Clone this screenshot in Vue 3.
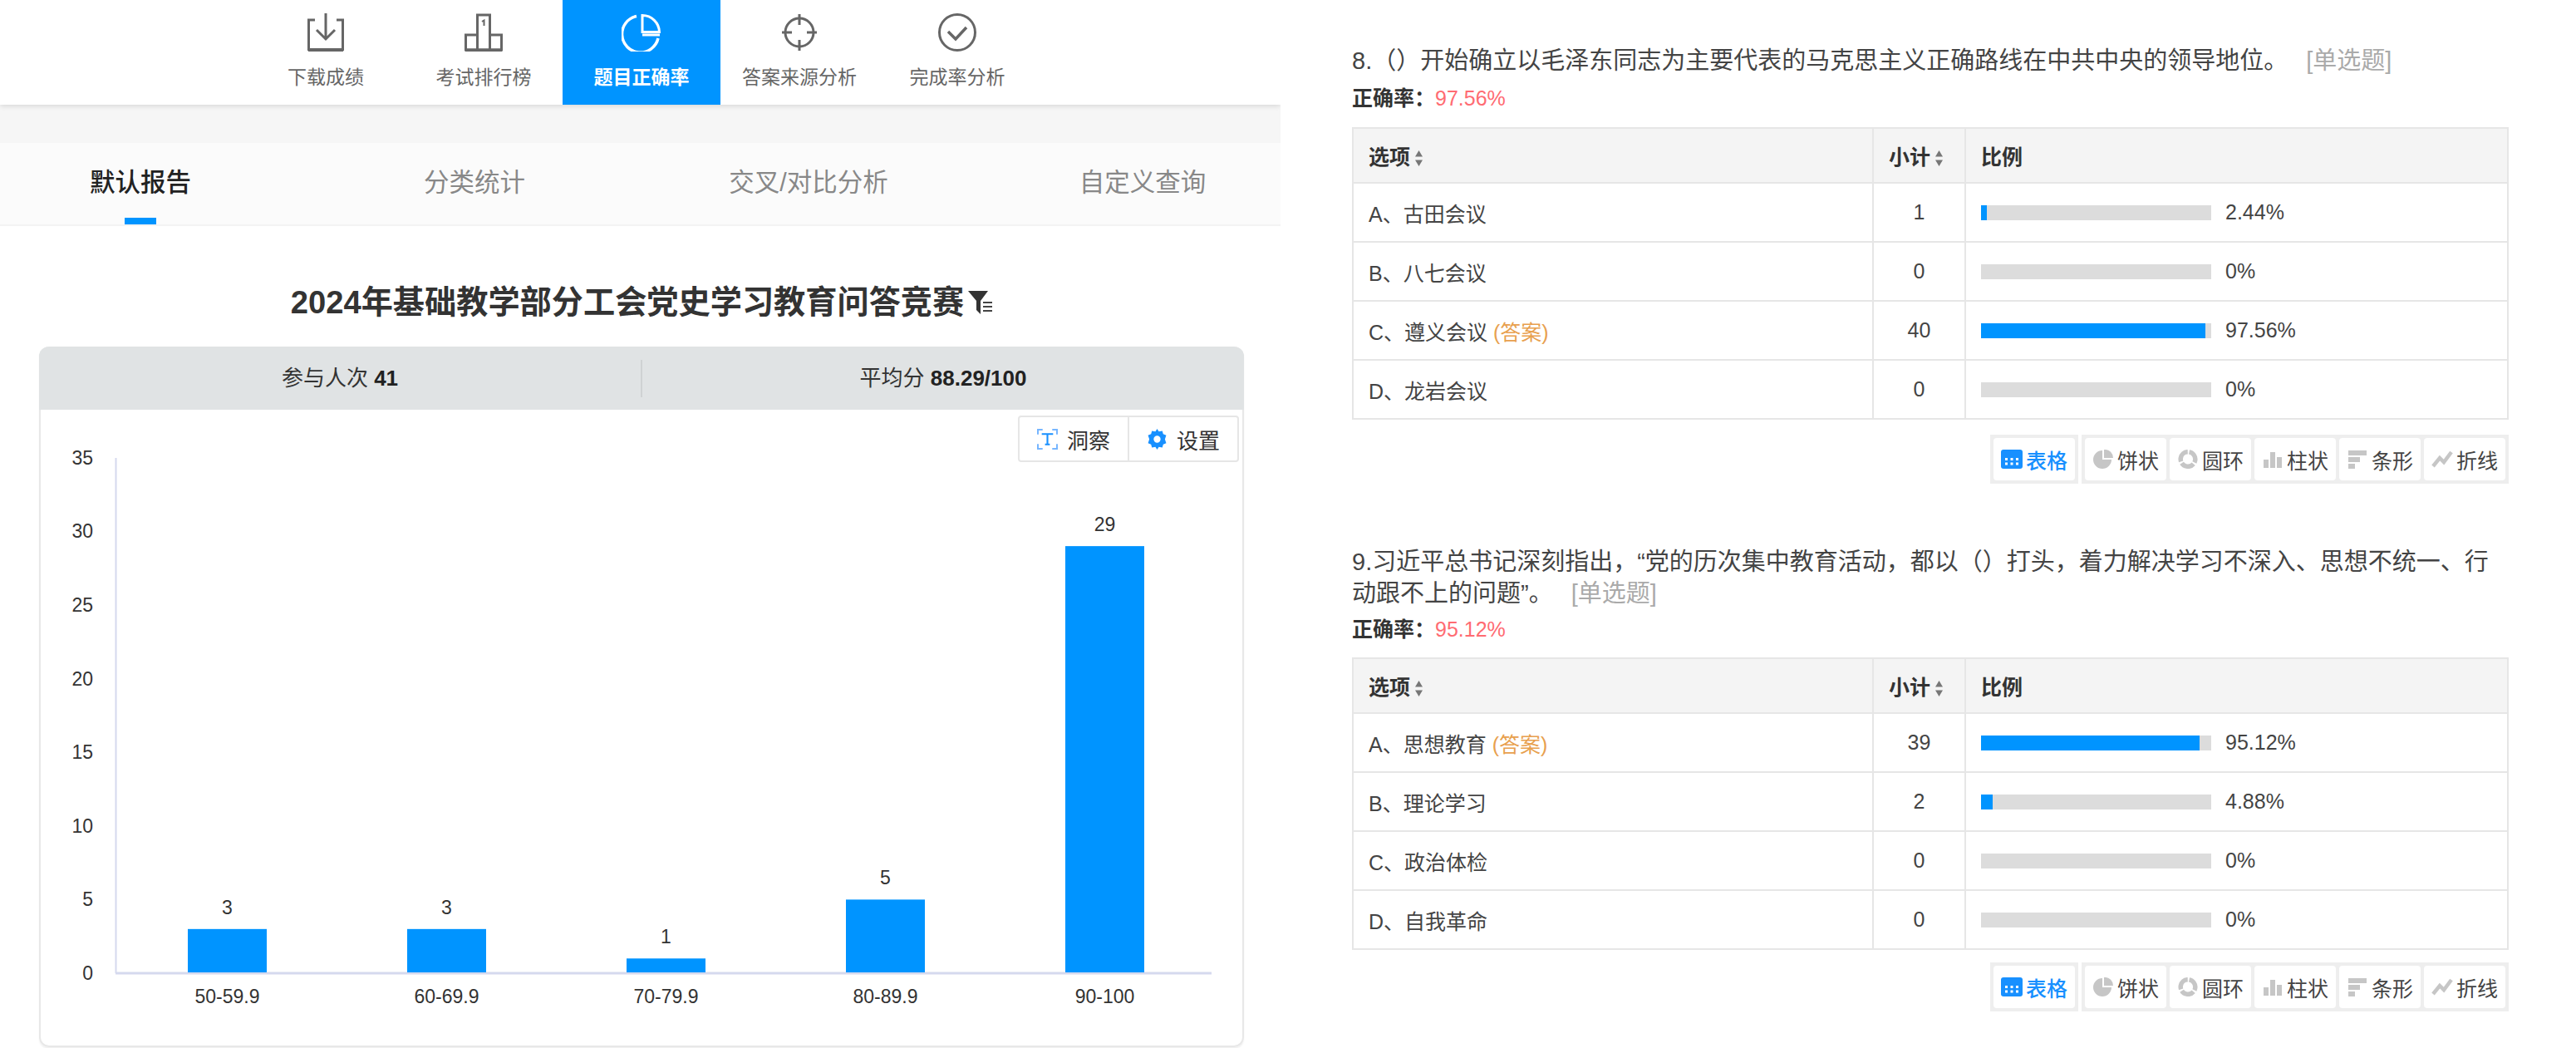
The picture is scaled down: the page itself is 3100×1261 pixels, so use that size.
<template>
<div class="page">
  <div class="left">
    <div class="toolbar">
      <div v-for="item in navItems" :key="item.label" class="nav-item" :class="{ active: item.active }">
        <svg class="nav-icon" viewBox="0 0 48 46" fill="none" stroke="currentColor" stroke-width="3">
          <template v-if="item.icon === 'download'">
            <path d="M11 8H3.500V43.500H44.500V8H37" />
            <path d="M24 0V31M13 20L24 31L35 20" />
            <path d="M3 44H45" stroke-width="4" />
          </template>
          <template v-if="item.icon === 'rank'">
            <path d="M2.500 44V26H16.500V44ZM16.500 44V2H31.500V44ZM31.500 26H45.500V44H31.500" />
            <path d="M22 10L24.500 8.500V15" stroke-width="2" />
            <path d="M2 44.500H46" stroke-width="4" />
          </template>
          <template v-if="item.icon === 'pie'">
            <path d="M18 3.500A22 22 0 1 0 44 30" stroke-width="3.500" />
            <path d="M25 2.500V22.500H45.500A20.500 20.500 0 0 0 25 2.500Z" />
            <path d="M25 26H46" />
          </template>
          <template v-if="item.icon === 'target'">
            <circle cx="24" cy="23" r="17" />
            <path d="M24 1V14M24 32V45M3 23H15M33 23H45" />
          </template>
          <template v-if="item.icon === 'check'">
            <circle cx="24" cy="23" r="21.500" />
            <path d="M13 22L22 31L35 17" stroke-width="3.500" />
          </template>
        </svg>
        <span>{{ item.label }}</span>
      </div>
    </div>
    <div class="band"></div>
    <div class="tabs">
      <div v-for="(tab, i) in tabs" :key="tab" class="tab" :class="{ active: i === 0 }">{{ tab }}</div>
    </div>

    <div class="title-row">
      <h1>2024年基础教学部分工会党史学习教育问答竞赛</h1>
      <svg class="filter" viewBox="0 0 30 30">
        <path d="M0 1H24L15 13V29L10 24V13Z" fill="#333" />
        <path d="M18 15H29M18 20H29M18 25H29" stroke="#444" stroke-width="2" />
      </svg>
    </div>

    <div class="card">
      <div class="stats">
        <div class="stat">参与人次 <b>41</b></div>
        <div class="stat split">平均分 <b>88.29/100</b></div>
      </div>
      <div class="actions">
        <div class="action">
          <svg viewBox="0 0 26 26" fill="none" stroke="#4a9dff" stroke-width="2.200">
            <path d="M1 7V1H7M19 1H25V7M25 19V25H19M7 25H1V19" opacity=".75" />
            <path d="M7 7.500V6.500H19V7.500M13 6.500V19.500M10 19.500H16" stroke="#1890ff" />
          </svg>
          洞察
        </div>
        <div class="action">
          <svg viewBox="0 0 24 24">
            <path fill="#1890ff" fill-rule="evenodd"
              d="M12 0L14 3.200L18 2.400L19 6L22.500 7.500L21 12L22.500 16.500L19 18L18 21.600L14 20.800L12 24L10 20.800L6 21.600L5 18L1.500 16.500L3 12L1.500 7.500L5 6L6 2.400L10 3.200ZM12 8A4 4 0 1 0 12 16A4 4 0 1 0 12 8Z" />
          </svg>
          设置
        </div>
      </div>
      <svg class="chart" viewBox="49 493 1446 765">
        <g class="ticks">
          <text v-for="t in yTicks" :key="t" x="112" :y="axisY(t) + 8" text-anchor="end">{{ t }}</text>
        </g>
        <line x1="139.500" y1="551" x2="139.500" y2="1171" stroke="#d5d9ee" stroke-width="2" />
        <line x1="139" y1="1171" x2="1458" y2="1171" stroke="#d5d9ee" stroke-width="3" />
        <g v-for="(bar, i) in bars" :key="bar.label">
          <rect :x="barX(i)" :y="axisY(bar.value)" width="95" :height="1170 - axisY(bar.value)" fill="#0094ff" />
          <text class="val" :x="barX(i) + 47.500" :y="axisY(bar.value) - 18" text-anchor="middle">{{ bar.value }}</text>
          <text class="cat" :x="barX(i) + 47.500" y="1207" text-anchor="middle">{{ bar.label }}</text>
        </g>
      </svg>
    </div>
  </div>

  <div class="right">
    <section v-for="q in questions" :key="q.no" class="question">
      <p class="q-title">{{ q.text }}<span class="q-type">[单选题]</span></p>
      <p class="q-rate"><b>正确率&#xFF1A;</b><span>{{ q.rate }}</span></p>
      <table>
        <colgroup>
          <col class="c1" />
          <col class="c2" />
          <col class="c3" />
        </colgroup>
        <thead>
          <tr>
            <th>选项<svg class="sort" viewBox="0 0 11 19"><path d="M5.500 0L10 7.500H1ZM5.500 19L1 11.500H10Z" fill="#777" /></svg></th>
            <th>小计<svg class="sort" viewBox="0 0 11 19"><path d="M5.500 0L10 7.500H1ZM5.500 19L1 11.500H10Z" fill="#777" /></svg></th>
            <th>比例</th>
          </tr>
        </thead>
        <tbody>
          <tr v-for="row in q.rows" :key="row.name">
            <td>{{ row.name }}<span v-if="row.answer" class="answer"> (答案)</span></td>
            <td class="num">{{ row.count }}</td>
            <td>
              <div class="ratio">
                <div class="track"><div class="fill" :style="{ width: row.pct + '%' }"></div></div>
                <span>{{ row.pct }}%</span>
              </div>
            </td>
          </tr>
        </tbody>
      </table>
      <div class="views">
        <div class="view-group">
          <div class="view on">
            <svg viewBox="0 0 26 23">
              <rect width="26" height="23" rx="3" fill="#1890ff" />
              <path d="M5 10h3v3H5zM11.500 10h3v3h-3zM18 10h3v3h-3zM5 15.500h3v3H5zM11.500 15.500h3v3h-3zM18 15.500h3v3h-3z" fill="#fff" />
            </svg>
            表格
          </div>
        </div>
        <div class="view-group">
          <div class="view">
            <svg viewBox="0 0 26 23">
              <path d="M12 1A11 11 0 1 0 23 12H12Z" fill="#c6c6c6" />
              <path d="M14 0A10 10 0 0 1 25 10H14Z" fill="#c6c6c6" />
            </svg>
            饼状
          </div>
          <div class="view">
            <svg viewBox="0 0 26 23" fill="none" stroke="#c6c6c6" stroke-width="5.500">
              <circle cx="13" cy="11.500" r="8.800" stroke-dasharray="16.300 2.100" transform="rotate(-80 13 11.500)" />
            </svg>
            圆环
          </div>
          <div class="view">
            <svg viewBox="0 0 26 23" fill="#c6c6c6">
              <rect x="2" y="12" width="6" height="10" />
              <rect x="10" y="3" width="6" height="19" />
              <rect x="18" y="9" width="6" height="13" />
            </svg>
            柱状
          </div>
          <div class="view">
            <svg viewBox="0 0 26 23" fill="#c6c6c6">
              <rect x="2" y="1" width="22" height="6" />
              <rect x="2" y="9" width="14" height="6" />
              <rect x="2" y="17" width="8" height="6" />
            </svg>
            条形
          </div>
          <div class="view">
            <svg viewBox="0 0 26 23" fill="none" stroke="#c6c6c6" stroke-width="4.500">
              <path d="M2 20L10 10L15 15L24 3" />
            </svg>
            折线
          </div>
        </div>
      </div>
    </section>
  </div>
</div>
</template>

<script setup>
const navItems = [
  { label: '下载成绩', icon: 'download' },
  { label: '考试排行榜', icon: 'rank' },
  { label: '题目正确率', icon: 'pie', active: true },
  { label: '答案来源分析', icon: 'target' },
  { label: '完成率分析', icon: 'check' }
]

const tabs = ['默认报告', '分类统计', '交叉/对比分析', '自定义查询']

const yTicks = [35, 30, 25, 20, 15, 10, 5, 0]

const bars = [
  { label: '50-59.9', value: 3 },
  { label: '60-69.9', value: 3 },
  { label: '70-79.9', value: 1 },
  { label: '80-89.9', value: 5 },
  { label: '90-100', value: 29 }
]

function axisY(v) {
  return 1171 - v * 17.72
}

function barX(i) {
  return 226 + i * 264
}

const questions = [
  {
    no: 8,
    text: '8.\uFF08\uFF09开始确立以毛泽东同志为主要代表的马克思主义正确路线在中共中央的领导地位。',
    rate: '97.56%',
    rows: [
      { name: 'A、古田会议', count: 1, pct: 2.44 },
      { name: 'B、八七会议', count: 0, pct: 0 },
      { name: 'C、遵义会议', count: 40, pct: 97.56, answer: true },
      { name: 'D、龙岩会议', count: 0, pct: 0 }
    ]
  },
  {
    no: 9,
    text: '9.习近平总书记深刻指出\uFF0C\u201C党的历次集中教育活动\uFF0C都以\uFF08\uFF09打头\uFF0C着力解决学习不深入、思想不统一、行动跟不上的问题\u201D。',
    rate: '95.12%',
    rows: [
      { name: 'A、思想教育', count: 39, pct: 95.12, answer: true },
      { name: 'B、理论学习', count: 2, pct: 4.88 },
      { name: 'C、政治体检', count: 0, pct: 0 },
      { name: 'D、自我革命', count: 0, pct: 0 }
    ]
  }
]
</script>

<style>
html, body {
  margin: 0;
  background: #fff;
}
</style>

<style scoped>
.page {
  display: flex;
  width: 3100px;
  height: 1261px;
  overflow: hidden;
  background: #fff;
  color: #333;
  font-family: "Liberation Sans", "Noto Sans CJK SC", sans-serif;
}

.left {
  width: 1541px;
  flex-shrink: 0;
  overflow: hidden;
}

.toolbar {
  position: relative;
  display: flex;
  height: 126px;
  padding-left: 297px;
  background: #fff;
  box-shadow: 0 2px 6px rgba(0, 0, 0, 0.12);
}

.nav-item {
  display: flex;
  flex-direction: column;
  align-items: center;
  width: 190px;
  padding-top: 16px;
  box-sizing: border-box;
  font-size: 23px;
  line-height: 32px;
  color: #666;
}

.nav-item.active {
  background: #0094ff;
  color: #fff;
  font-weight: 700;
}

.nav-icon {
  width: 48px;
  height: 46px;
  margin-bottom: 15px;
}

.band {
  height: 46px;
  background: #f6f6f6;
}

.tabs {
  display: flex;
  height: 100px;
  margin-left: -32px;
  box-sizing: border-box;
  background: #fbfbfb;
  border-bottom: 2px solid #f3f3f3;
}

.tab {
  position: relative;
  width: 402px;
  flex-shrink: 0;
  text-align: center;
  font-size: 30.500px;
  line-height: 94px;
  color: #888;
}

.tab.active {
  color: #222;
  font-weight: 500;
}

.tab.active::after {
  content: "";
  position: absolute;
  left: 182px;
  bottom: 0;
  width: 38px;
  height: 8px;
  background: #0094ff;
}

.title-row {
  display: flex;
  justify-content: center;
  align-items: center;
  height: 145px;
  padding-top: 39px;
  box-sizing: border-box;
  margin-left: 4px;
}

h1 {
  margin: 0;
  font-size: 38.200px;
  line-height: 50px;
  font-weight: 700;
  color: #333;
}

.filter {
  width: 30px;
  height: 30px;
  margin-left: 5px;
}

.card {
  position: relative;
  width: 1450px;
  height: 843px;
  margin-left: 47px;
  box-sizing: border-box;
  border: 2px solid #e8e8e8;
  border-top: none;
  border-radius: 12px;
  box-shadow: 0 2px 2px rgba(0, 0, 0, 0.06);
}

.stats {
  display: flex;
  align-items: center;
  height: 76px;
  margin: 0 -2px;
  background: #e0e3e4;
  border-radius: 12px 12px 0 0;
  font-size: 26px;
}

.stat {
  flex: 1;
  text-align: center;
  line-height: 45px;
}

.stat.split {
  border-left: 2px solid #cfd2d3;
}

.stat b {
  color: #222;
}

.actions {
  position: absolute;
  top: 83px;
  right: 4px;
  display: flex;
  height: 56px;
  box-sizing: border-box;
  background: #fff;
  border: 2px solid #e6e6e6;
  border-radius: 4px;
  z-index: 1;
}

.action {
  display: flex;
  align-items: center;
  gap: 11px;
  padding: 0 21px;
  font-size: 26px;
  color: #333;
}

.action + .action {
  border-left: 2px solid #e6e6e6;
}

.action svg {
  width: 25px;
  height: 25px;
}

.chart {
  display: block;
  width: 1446px;
  height: 765px;
}

.ticks text,
.val,
.cat {
  font-size: 23px;
  fill: #333;
}

.right {
  flex: 1;
  padding: 54px 0 0 86px;
  box-sizing: border-box;
}

.question {
  width: 1392px;
}

.question + .question {
  margin-top: 75px;
}

.question + .question .q-rate {
  margin: 5px 0 15px;
}

.question + .question .views {
  margin-top: 15px;
}

.q-title {
  margin: 0;
  font-size: 29px;
  line-height: 38px;
  color: #444;
}

.q-type {
  margin-left: 22px;
  color: #aaa;
}

.q-rate {
  margin: 7px 0 16px;
  font-size: 25px;
  line-height: 38px;
}

.q-rate span {
  color: #ff6b72;
}

table {
  width: 1392px;
  table-layout: fixed;
  border-collapse: collapse;
  font-size: 25px;
  color: #444;
}

.c1 {
  width: 626px;
}

.c2 {
  width: 111px;
}

th, td {
  padding: 0 18px;
  border: 2px solid #e6e6e6;
  text-align: left;
}

th {
  height: 64px;
  background: #f4f4f4;
  color: #333;
  font-weight: 700;
}

td {
  height: 69px;
}

.sort {
  width: 11px;
  height: 19px;
  margin-left: 5px;
  vertical-align: -2px;
}

.num {
  text-align: center;
}

.answer {
  color: #e8a04e;
}

.ratio {
  display: flex;
  align-items: center;
  gap: 17px;
}

.track {
  width: 277px;
  height: 18px;
  background: #dcdcdc;
}

.fill {
  height: 100%;
  background: #0094ff;
}

.views {
  display: flex;
  justify-content: flex-end;
  gap: 4px;
  margin-top: 18px;
}

.view-group {
  display: flex;
  gap: 4px;
  padding: 4px;
  background: #eee;
}

.view {
  display: flex;
  align-items: center;
  justify-content: center;
  gap: 4px;
  width: 98px;
  height: 51px;
  background: #fff;
  border-radius: 4px;
  font-size: 25px;
  color: #444;
}

.view.on {
  color: #1890ff;
  font-weight: 500;
}

.view svg {
  width: 26px;
  height: 23px;
}
</style>
